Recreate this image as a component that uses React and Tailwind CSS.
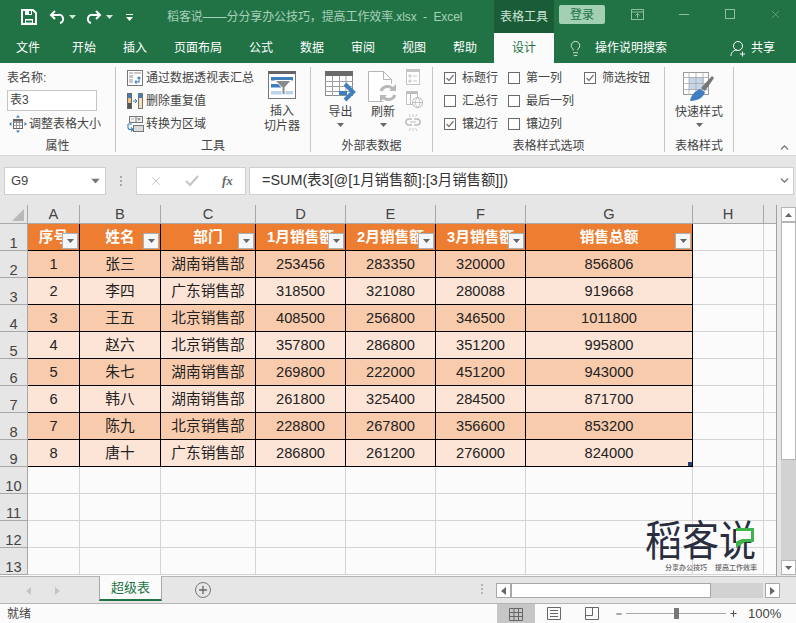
import React from 'react';
import { ChevronDown, ChevronUp, Lightbulb, Plus, Minus, X } from 'lucide-react';

const tabs = [
  { label: '文件', w: 'w-[56px]' },
  { label: '开始', w: 'w-[56px]' },
  { label: '插入', w: 'w-[46px]' },
  { label: '页面布局', w: 'w-[80px]' },
  { label: '公式', w: 'w-[46px]' },
  { label: '数据', w: 'w-[56px]' },
  { label: '审阅', w: 'w-[46px]' },
  { label: '视图', w: 'w-[56px]' },
  { label: '帮助', w: 'w-[46px]' },
];

const columns = ['A', 'B', 'C', 'D', 'E', 'F', 'G', 'H'];
const headers = ['序号', '姓名', '部门', '1月销售额', '2月销售额', '3月销售额', '销售总额'];

const rows = [
  ['1', '张三', '湖南销售部', '253456', '283350', '320000', '856806'],
  ['2', '李四', '广东销售部', '318500', '321080', '280088', '919668'],
  ['3', '王五', '北京销售部', '408500', '256800', '346500', '1011800'],
  ['4', '赵六', '北京销售部', '357800', '286800', '351200', '995800'],
  ['5', '朱七', '湖南销售部', '269800', '222000', '451200', '943000'],
  ['6', '韩八', '湖南销售部', '261800', '325400', '284500', '871700'],
  ['7', '陈九', '北京销售部', '228800', '267800', '356600', '853200'],
  ['8', '唐十', '广东销售部', '286800', '261200', '276000', '824000'],
];

const Caret = ({ className = '' }) => (
  <svg width="7" height="4" viewBox="0 0 7 4" className={className}>
    <path d="M0 0h7L3.5 4z" fill="currentColor" />
  </svg>
);

const Check = ({ on, label }) => (
  <div className="flex items-center h-[23px]">
    <div className="w-[12px] h-[12px] border border-[#6a6a6a] bg-white flex items-center justify-center shrink-0">
      {on && (
        <svg width="10" height="10" viewBox="0 0 10 10">
          <path d="M1.5 5l2.5 2.5L8.5 2" fill="none" stroke="#777" strokeWidth="1.2" />
        </svg>
      )}
    </div>
    <span className="ml-[6px] whitespace-nowrap">{label}</span>
  </div>
);

const GroupLabel = ({ children }) => (
  <div className="absolute left-0 right-0 bottom-[-2px] text-center leading-[16px]">{children}</div>
);

const FilterBtn = () => (
  <div className="absolute right-[1px] bottom-[1px] w-[16px] h-[16px] bg-[#f4f6f8] border border-[#a9b0b6] flex items-center justify-center text-[#666]">
    <Caret />
  </div>
);

const RowHead = ({ children }) => (
  <div className="h-[27px] bg-[#e6e6e6] border-r border-b border-[#a8a8a8] flex items-end justify-center leading-[13px] text-[#444]">{children}</div>
);

const PivotIcon = () => (
  <svg width="16" height="16" viewBox="0 0 16 16">
    <rect x="0.5" y="0.5" width="15" height="15" fill="#fff" stroke="#777" />
    <path d="M2 2h4v2H2zM7 2h7v2H7zM2 5h4v3H2zM2 9h4v4H2z" fill="#c8c8c8" />
    <path d="M8 12h4V7M12 7l-1.5 1.5M12 7l1.5 1.5M8 12l1.5-1.5M8 12l1.5 1.5" fill="none" stroke="#3f7fbf" strokeWidth="1.1" />
  </svg>
);

const DedupIcon = () => (
  <svg width="16" height="16" viewBox="0 0 16 16">
    <rect x="0.5" y="0.5" width="4" height="15" fill="#f1c27d" stroke="#666" />
    <rect x="11.5" y="0.5" width="4" height="15" fill="#f7dcb4" stroke="#777" />
    <path d="M1 1h3v4H1z" fill="#3f7fbf" />
    <path d="M1 10h3v5H1z" fill="#555" />
    <path d="M12 1h3v4h-3z" fill="#3f7fbf" />
    <path d="M6 8h4M8 6l2 2-2 2" fill="none" stroke="#3f7fbf" strokeWidth="1" />
  </svg>
);

const ConvertIcon = () => (
  <svg width="17" height="16" viewBox="0 0 17 16">
    <rect x="2.5" y="0.5" width="13" height="6" fill="#f2f2f2" stroke="#777" />
    <path d="M9 .5v6" stroke="#777" />
    <path d="M4 3h3M10.5 2.5h3L12 4.5z" fill="#777" stroke="#999" strokeWidth="0.6" />
    <rect x="6.5" y="9.5" width="10" height="6" fill="#dcdcdc" stroke="#777" />
    <path d="M1 8v3.5c0 1.5 1 2 2.5 2H6M4 11.5l2 2-2 2M5 8H1" fill="none" stroke="#3f7fbf" strokeWidth="1.1" />
  </svg>
);

const ResizeIcon = () => (
  <svg width="18" height="18" viewBox="0 0 18 18">
    <rect x="4.5" y="4.5" width="9" height="9" fill="#fff" stroke="#666" />
    <path d="M4.5 7.5h9M4.5 10.5h9M7.5 4.5v9M10.5 4.5v9" stroke="#888" strokeWidth="0.8" />
    <path d="M4.5 4.5h9v2h-9z" fill="#666" />
    <path d="M9 0l2 2.5H7zM9 18l2-2.5H7zM0 9l2.5-2v4zM18 9l-2.5-2v4z" fill="#3f7fbf" />
  </svg>
);

const SlicerIcon = () => (
  <svg width="28" height="28" viewBox="0 0 28 28">
    <rect x="0.5" y="0.5" width="27" height="27" fill="#fff" stroke="#777" />
    <rect x="0" y="0" width="28" height="3" fill="#666" />
    <rect x="3" y="6" width="22" height="3.5" fill="#3f7fbf" />
    <rect x="3" y="13" width="10" height="3.5" fill="#3f7fbf" />
    <rect x="3" y="20" width="22" height="3.5" fill="#bcd3ea" />
    <path d="M7 9.5h16l-6 7v8l-3-2v-6z" fill="#8a8a8a" stroke="#fff" strokeWidth="1" />
  </svg>
);

const ExportIcon = () => (
  <svg width="31" height="32" viewBox="0 0 31 32">
    <rect x="0.5" y="0.5" width="27" height="24" fill="#fff" stroke="#8a8a8a" />
    <rect x="0" y="0" width="28" height="5" fill="#6a6a6a" />
    <path d="M0 10.5h28M0 15.5h28M0 20.5h28M7.5 5v20M14.5 5v20M21 5v20" stroke="#a0a0a0" strokeWidth="1" />
    <path d="M14 22h8M20 13l8 8-8 8" fill="none" stroke="#3f7fbf" strokeWidth="4" />
  </svg>
);

const RefreshIcon = () => (
  <svg width="30" height="33" viewBox="0 0 30 33">
    <path d="M.5.5h15l8 8v22H.5z" fill="#fff" stroke="#b5b5b5" />
    <path d="M15.5.5v8h8" fill="none" stroke="#b5b5b5" />
    <circle cx="20" cy="22" r="10" fill="#fff" />
    <path d="M13 20a7 7 0 0 1 12-2M27 24a7 7 0 0 1-12 2" fill="none" stroke="#b9b9b9" strokeWidth="3" />
    <path d="M28 13v7h-7zM12 31v-7h7z" fill="#b9b9b9" />
  </svg>
);

const PropsIcon = () => (
  <svg width="16" height="16" viewBox="0 0 16 16">
    <rect x="1.5" y="0.5" width="13" height="15" fill="#fff" stroke="#c4c4c4" />
    <path d="M1 1h14v2H1z" fill="#c4c4c4" />
    <path d="M4 6h2v2H4zM4 11h2v2H4z" fill="none" stroke="#c4c4c4" />
    <path d="M8 7h4M8 12h4" stroke="#c4c4c4" />
  </svg>
);

const BrowserIcon = () => (
  <svg width="18" height="17" viewBox="0 0 18 17">
    <rect x="1.5" y="0.5" width="11" height="13" fill="#fff" stroke="#c4c4c4" />
    <path d="M1 1h12v2H1zM5 3h1v10H5z" fill="#bdbdbd" />
    <circle cx="12.5" cy="11.5" r="5" fill="#fff" stroke="#b5b5b5" />
    <path d="M7.5 11.5h10M12.5 6.5c-3 3-3 7 0 10M12.5 6.5c3 3 3 7 0 10" fill="none" stroke="#b5b5b5" strokeWidth="0.8" />
  </svg>
);

const UnlinkIcon = () => (
  <svg width="16" height="17" viewBox="0 0 16 17">
    <path d="M7 5H4a2.5 2.5 0 0 0 0 6h3M9 5h3a2.5 2.5 0 0 1 0 6H9" fill="none" stroke="#bdbdbd" strokeWidth="1.6" />
    <path d="M5 8h6" stroke="#bdbdbd" />
    <path d="M4 0l1.5 3M8 0v3M12 0l-1.5 3M4 17l1.5-3M8 17v-3M12 17l-1.5-3" stroke="#c9c9c9" />
  </svg>
);

const StyleIcon = () => (
  <svg width="32" height="30" viewBox="0 0 32 30">
    <rect x="0.5" y="0.5" width="25" height="22" fill="#fff" stroke="#999" />
    <path d="M6 5h15v13H6z" fill="#c5d6ea" />
    <path d="M0 5.5h26M0 11.5h26M0 17.5h26M6 0v23M13 0v23M20 0v23" stroke="#a9a9a9" strokeWidth="0.8" />
    <path d="M18 16L29 4l2 2-9 13z" fill="#777" />
    <path d="M7 29c1-6 5-10 10-12l5 3c-1 5-7 9-15 9z" fill="#3f7fbf" />
  </svg>
);

const App = () => {
  return (
    <div className="w-[796px] h-[623px] overflow-hidden bg-[#e6e6e6] font-['Liberation_Sans','Noto_Sans_CJK_SC',sans-serif] text-[12px] text-[#444]">
      {/* Title bar */}
      <div className="h-[33px] bg-[#217346] flex items-center text-[#a9d0ba] relative">
        <svg width="16" height="16" viewBox="0 0 16 16" className="ml-[21px] text-white">
          <path d="M1 1h11l3 3v11H1z" fill="none" stroke="currentColor" strokeWidth="2" />
          <path d="M4 1h7v5H4zM4 10h8v5H4z" fill="currentColor" />
          <path d="M8 2h2v3H8z" fill="#217346" />
          <path d="M5 11.5h6v2H5z" fill="#217346" />
        </svg>
        <svg width="16" height="14" viewBox="0 0 16 14" className="ml-[12px]">
          <path d="M6 1L2 5l4 4M2 5h7a4 4 0 0 1 2 8" fill="none" stroke="#fff" strokeWidth="2" />
        </svg>
        <Caret className="ml-[4px] text-[#d5e8dc]" />
        <svg width="16" height="14" viewBox="0 0 16 14" className="ml-[10px]">
          <path d="M10 1l4 4-4 4M14 5H7a4 4 0 0 0-2 8" fill="none" stroke="#fff" strokeWidth="2" />
        </svg>
        <Caret className="ml-[4px] text-[#d5e8dc]" />
        <svg width="7" height="7" viewBox="0 0 7 7" className="ml-[13px] mt-[1px] text-white">
          <path d="M0 0h7v1H0zM0 3h7L3.5 7z" fill="currentColor" />
        </svg>
        <span className="ml-[34px] w-[296px] whitespace-nowrap overflow-hidden tracking-[-0.1px]">稻客说——分分享办公技巧，提高工作效率.xlsx&nbsp; -&nbsp; Excel</span>
        <div className="w-[60px] h-[33px] bg-[#1a5c38] text-[#cfe4d7] flex items-center justify-center absolute left-[494px] top-0">表格工具</div>
        <div className="absolute left-[559px] top-[5px] w-[46px] h-[19px] rounded-[2px] bg-[#a3cfb2] text-[#217346] flex items-center justify-center">登录</div>
        <div className="absolute left-[631px] top-[9px]">
          <svg width="13" height="11" viewBox="0 0 13 11">
            <rect x="0.5" y="0.5" width="12" height="10" fill="none" stroke="#8fbfa3" />
            <path d="M0 3h13M6.5 9V4.5M4.5 6.5l2-2 2 2" fill="none" stroke="#8fbfa3" />
          </svg>
        </div>
        <div className="absolute left-[679px] top-[14px] w-[10px] h-[1px] bg-[#8fbfa3]" />
        <div className="absolute left-[725px] top-[9px] w-[10px] h-[10px] border border-[#8fbfa3]" />
        <X size={13} strokeWidth={1} className="absolute left-[769px] top-[8px] text-[#8fbfa3]" />
      </div>

      {/* Tabs */}
      <div className="h-[30px] bg-[#217346] flex items-center text-white">
        {tabs.map((t) => (
          <div key={t.label} className={`${t.w} text-center`}>{t.label}</div>
        ))}
        <div className="ml-[6px] w-[60px] h-[30px] bg-[#fbfbfb] text-[#217346] flex items-center justify-center">设计</div>
        <Lightbulb size={17} strokeWidth={1.1} className="ml-[13px]" />
        <span className="ml-[11px]">操作说明搜索</span>
        <svg width="16" height="17" viewBox="0 0 16 17" className="ml-[63px]">
          <circle cx="8" cy="6" r="4.5" fill="none" stroke="#fff" />
          <path d="M1 16c0-4 3-6 6-6M10 14h5M12.5 11.5v5" fill="none" stroke="#fff" />
        </svg>
        <span className="ml-[5px]">共享</span>
      </div>

      {/* Ribbon */}
      <div className="h-[93px] bg-[#fbfbfb] border-b border-[#d4d4d4] flex relative text-[#444]">
        <section className="w-[116px] h-[85px] mt-[4px] border-r border-[#c6c6c6] relative pl-[7px] pt-[2px]">
          <div className="leading-[18px]">表名称:</div>
          <div className="w-[90px] h-[21px] border border-[#c6c6c6] bg-white mt-[3px] pl-[2px] leading-[19px]">表3</div>
          <div className="flex items-center mt-[2px] ml-[2px] h-[22px]">
            <ResizeIcon />
            <span className="ml-[2px]">调整表格大小</span>
          </div>
          <GroupLabel>属性</GroupLabel>
        </section>

        <section className="w-[195px] h-[85px] mt-[4px] border-r border-[#c6c6c6] relative flex">
          <div className="ml-[11px] mt-[-1px] w-[141px]">
            <div className="flex items-center h-[23px]"><PivotIcon /><span className="ml-[3px] whitespace-nowrap">通过数据透视表汇总</span></div>
            <div className="flex items-center h-[23px]"><DedupIcon /><span className="ml-[3px]">删除重复值</span></div>
            <div className="flex items-center h-[23px]"><ConvertIcon /><span className="ml-[2px]">转换为区域</span></div>
          </div>
          <div className="flex flex-col items-center w-[28px] mt-[4px]">
            <SlicerIcon />
            <div className="mt-[5px] leading-[15px] text-center whitespace-nowrap">插入<br />切片器</div>
          </div>
          <GroupLabel>工具</GroupLabel>
        </section>

        <section className="w-[122px] h-[85px] mt-[4px] border-r border-[#c6c6c6] relative flex">
          <div className="w-[31px] ml-[14px] mt-[4px] flex flex-col items-center">
            <ExportIcon />
            <div className="leading-[15px] mt-[2px]">导出</div>
            <Caret className="mt-[3px] text-[#666]" />
          </div>
          <div className="w-[30px] ml-[12px] mt-[4px] flex flex-col items-center">
            <RefreshIcon />
            <div className="leading-[15px] mt-[1px]">刷新</div>
            <Caret className="mt-[3px] text-[#666]" />
          </div>
          <div className="ml-[7px] mt-[2px] flex flex-col items-start gap-[6px]">
            <PropsIcon />
            <BrowserIcon />
            <UnlinkIcon />
          </div>
          <GroupLabel>外部表数据</GroupLabel>
        </section>

        <section className="w-[232px] h-[85px] mt-[4px] border-r border-[#c6c6c6] relative flex pl-[11px] text-[#444]">
          <div className="w-[64px] mt-[-1px]">
            <Check on label="标题行" />
            <Check label="汇总行" />
            <Check on label="镶边行" />
          </div>
          <div className="w-[76px] mt-[-1px]">
            <Check label="第一列" />
            <Check label="最后一列" />
            <Check label="镶边列" />
          </div>
          <div className="mt-[-1px]">
            <Check on label="筛选按钮" />
          </div>
          <GroupLabel>表格样式选项</GroupLabel>
        </section>

        <section className="w-[69px] h-[85px] mt-[4px] border-r border-[#c6c6c6] relative flex flex-col items-center pt-[5px]">
          <StyleIcon />
          <div className="leading-[15px] mt-[3px]">快速样式</div>
          <Caret className="mt-[3px] text-[#666]" />
          <GroupLabel>表格样式</GroupLabel>
        </section>

        <ChevronUp size={13} strokeWidth={2.2} className="absolute right-[5px] bottom-[1px] text-[#666]" />
      </div>

      {/* Formula bar */}
      <div className="h-[49px] flex pt-[11px] pb-[10px] text-[#444]">
        <div className="w-[102px] ml-[4px] bg-white border border-[#cfcfcf] flex items-center pl-[6px] text-[13px]">
          G9
          <Caret className="ml-auto mr-[6px] text-[#777] scale-125" />
        </div>
        <div className="w-[30px] flex flex-col items-center justify-center gap-[2px]">
          <div className="w-[2px] h-[2px] bg-[#a8a8a8]" />
          <div className="w-[2px] h-[2px] bg-[#a8a8a8]" />
          <div className="w-[2px] h-[2px] bg-[#a8a8a8]" />
        </div>
        <div className="w-[110px] bg-white border border-[#cfcfcf] flex items-center">
          <X size={14} strokeWidth={1.6} className="ml-[12px] text-[#c4c4c4]" />
          <svg width="14" height="12" viewBox="0 0 14 12" className="ml-[22px]">
            <path d="M1 6l4 4 8-9" fill="none" stroke="#c4c4c4" strokeWidth="2" />
          </svg>
          <span className="ml-[23px] font-['Liberation_Serif',serif] italic font-bold text-[#666] text-[13px]">fx</span>
        </div>
        <div className="w-[545px] ml-[3px] bg-white border border-[#cfcfcf] flex items-center pl-[12px] pb-[1px] text-[14.4px] text-[#333]">
          =SUM(表3[@[1月销售额]:[3月销售额]])
          <ChevronDown size={13} strokeWidth={2.2} className="ml-auto mr-[2px] text-[#666]" />
        </div>
      </div>

      {/* Sheet */}
      <div className="h-[371px] flex">
        <div className="w-[777px] relative overflow-hidden bg-[#fbfbfb] text-[14.67px] border-r border-[#a0a0a0]">
          <div className="grid grid-cols-[28px_52px_81px_95px_90px_90px_90px_167px_71px_13px]">
            {/* column letters */}
            <div className="h-[19px] bg-[#e6e6e6] border-r border-b border-[#a8a8a8] flex items-end justify-end pr-[3px] pb-[2px]">
              <svg width="12" height="12" viewBox="0 0 12 12"><path d="M12 0v12H0z" fill="#b9b9b9" /></svg>
            </div>
            {columns.map((c) => (
              <div key={c} className="h-[19px] pt-[1px] bg-[#e6e6e6] border-r border-b border-[#a8a8a8] text-[#444] flex items-center justify-center leading-none">{c}</div>
            ))}
            <div className="h-[19px] bg-[#e6e6e6] border-b border-[#a8a8a8]" />

            {/* header row */}
            <RowHead>1</RowHead>
            {headers.map((h) => (
              <div key={h} className="h-[27px] relative bg-[#ed7d31] border-r border-b border-black text-white font-bold flex items-center justify-center whitespace-nowrap overflow-hidden">
                {h}
                <FilterBtn />
              </div>
            ))}
            <div className="h-[27px] border-r border-b border-[#d4d4d4]" />
            <div className="h-[27px] border-b border-[#d4d4d4]" />

            {rows.map((r, i) => (
              <React.Fragment key={r[0]}>
                <RowHead>{i + 2}</RowHead>
                {r.map((v, j) => (
                  <div
                    key={j}
                    className={`h-[27px] relative border-r border-b border-black text-[#222] flex items-center justify-center ${i % 2 === 0 ? 'bg-[#f8cbad]' : 'bg-[#fce4d6]'}`}
                  >
                    {v}
                    {i === 7 && j === 6 && <div className="absolute right-0 bottom-0 w-[4px] h-[4px] bg-[#203f7a]" />}
                  </div>
                ))}
                <div className="h-[27px] border-r border-b border-[#d4d4d4]" />
                <div className="h-[27px] border-b border-[#d4d4d4]" />
              </React.Fragment>
            ))}

            {[10, 11, 12, 13].map((n) => (
              <React.Fragment key={n}>
                <RowHead>{n}</RowHead>
                {[0, 1, 2, 3, 4, 5, 6, 7].map((j) => (
                  <div key={j} className="h-[27px] border-r border-b border-[#d4d4d4]" />
                ))}
                <div className="h-[27px] border-b border-[#d4d4d4]" />
              </React.Fragment>
            ))}
          </div>

          {/* logo */}
          <div className="absolute left-[645px] top-[317px] w-[116px] text-[#2a2d3e]">
            <div className="text-[37px] leading-[36px] whitespace-nowrap origin-top scale-y-[1.14]">稻客说</div>
            <div className="mt-[6px] pl-[20px] text-[7px] leading-[8px] font-medium text-[#666] whitespace-nowrap flex gap-[8px]">
              <span>分享办公技巧</span>
              <span>提高工作效率</span>
            </div>
            <svg width="18" height="20" viewBox="0 0 18 20" className="absolute left-[91px] top-[6px] z-10">
              <path d="M0 3h15v8H6l-6 3z" fill="#fbfbfb" />
              <path d="M0 0h18v14H9L0 20v-6l6-3h9V3H0z" fill="#3db54a" />
            </svg>
          </div>
        </div>

        {/* vertical scrollbar */}
        <div className="w-[15px] ml-[4px] bg-[#d2d2d2] flex flex-col mt-[2px] mb-[1px]">
          <div className="h-[15px] bg-white border border-[#b5b5b5] flex items-center justify-center text-[#666]"><Caret className="rotate-180" /></div>
          <div className="h-[238px] bg-white border border-[#b5b5b5]" />
          <div className="h-[15px] mt-auto bg-white border border-[#b5b5b5] flex items-center justify-center text-[#666]"><Caret /></div>
        </div>
      </div>

      {/* Sheet tabs */}
      <div className="h-[28px] flex border-t border-b border-[#b5b5b5] relative">
        <svg width="5" height="8" viewBox="0 0 5 8" className="ml-[26px] mt-[10px] text-[#c4c4c4]"><path d="M5 0v8L0 4z" fill="currentColor" /></svg>
        <svg width="5" height="8" viewBox="0 0 5 8" className="ml-[24px] mt-[10px] text-[#c4c4c4]"><path d="M0 0v8l5-4z" fill="currentColor" /></svg>
        <div className="ml-[39px] mt-[-1px] w-[63px] h-[25px] bg-[#fbfbfb] border-x border-[#a8a8a8] border-b-2 border-b-[#217346] text-[#217346] text-center leading-[24px] text-[13px]">超级表</div>
        <div className="ml-[33px] mt-[5px] w-[16px] h-[16px] rounded-full border border-[#777] text-[#666] flex items-center justify-center">
          <Plus size={12} strokeWidth={2.6} />
        </div>
        <div className="absolute left-[481px] top-[7px] flex flex-col gap-[2px]">
          <div className="w-[2px] h-[2px] bg-[#b5b5b5]" />
          <div className="w-[2px] h-[2px] bg-[#b5b5b5]" />
          <div className="w-[2px] h-[2px] bg-[#b5b5b5]" />
        </div>
        <div className="absolute left-[496px] top-[6px] w-[284px] h-[15px] flex">
          <div className="w-[15px] bg-white border border-[#a8a8a8] flex items-center justify-center text-[#666]">
            <svg width="5" height="8" viewBox="0 0 5 8"><path d="M5 0v8L0 4z" fill="currentColor" /></svg>
          </div>
          <div className="w-[201px] bg-white border border-[#a8a8a8]" />
          <div className="w-[52px] bg-[#d2d2d2]" />
          <div className="w-[15px] ml-[2px] bg-white border border-[#a8a8a8] flex items-center justify-center text-[#666]">
            <svg width="5" height="8" viewBox="0 0 5 8"><path d="M0 0v8l5-4z" fill="currentColor" /></svg>
          </div>
        </div>
      </div>

      {/* Status bar */}
      <div className="h-[20px] bg-[#fbfbfb] flex items-center relative">
        <span className="ml-[7px]">就绪</span>
        <div className="absolute left-[497px] top-0 w-[38px] h-[20px] bg-[#c6c6c6] flex items-center justify-center">
          <svg width="14" height="13" viewBox="0 0 14 13">
            <path d="M.5.5h13v12H.5zM.5 4.5h13M.5 8.5h13M5 .5v12M9.5.5v12" fill="none" stroke="#666" />
          </svg>
        </div>
        <svg width="14" height="13" viewBox="0 0 14 13" className="absolute left-[547px] top-[3px]">
          <path d="M.5.5h13v12H.5z" fill="none" stroke="#666" />
          <path d="M3 3.5h8M3 6.5h8M3 9.5h8" stroke="#666" />
        </svg>
        <svg width="14" height="13" viewBox="0 0 14 13" className="absolute left-[585px] top-[3px]">
          <path d="M.5.5h13v12H.5zM.5 8.5h7M7.5.5v8" fill="none" stroke="#666" />
        </svg>
        <Minus size={8} strokeWidth={3} className="absolute left-[615px] top-[6px] text-[#555]" />
        <div className="absolute left-[626px] top-[9px] w-[100px] h-[1px] bg-[#a8a8a8]" />
        <div className="absolute left-[674px] top-[4px] w-[5px] h-[11px] bg-[#777]" />
        <Plus size={9} strokeWidth={3} className="absolute left-[729px] top-[5px] text-[#555]" />
        <span className="absolute left-[748px] top-[1px] text-[13px] leading-[18px]">100%</span>
      </div>
    </div>
  );
};

export default App;
